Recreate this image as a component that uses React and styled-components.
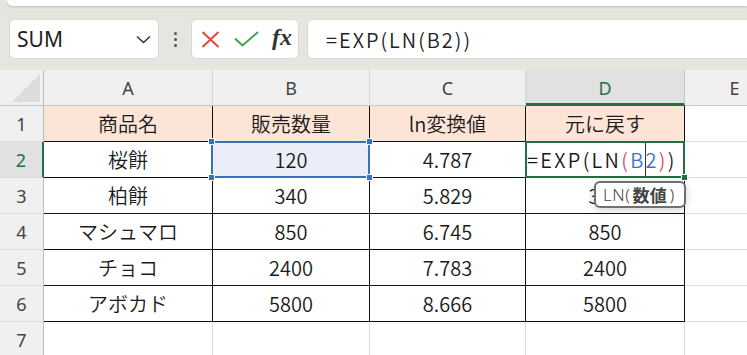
import React from "react";
import styled, { createGlobalStyle, css } from "styled-components";

const GlobalStyle = createGlobalStyle`
  html, body {
    margin: 0;
    padding: 0;
    background: #ffffff;
    overflow: hidden;
  }
  body {
    font-family: "Noto Sans", "Noto Sans CJK JP", sans-serif;
  }
`;

const GREEN = "#1f7145";
const BLUE = "#3a6fc6";
const CELL_FONT = `"Noto Sans CJK JP", "Noto Sans", sans-serif`;

const COLUMNS = ["A", "B", "C", "D", "E"];

const ROWS = [
  ["商品名", "販売数量", "ln変換値", "元に戻す"],
  ["桜餅", "120", "4.787", null],
  ["柏餅", "340", "5.829", "340"],
  ["マシュマロ", "850", "6.745", "850"],
  ["チョコ", "2400", "7.783", "2400"],
  ["アボカド", "5800", "8.666", "5800"],
];

const App = () => {
  return (
    <Page>
      <GlobalStyle />
      <TopStrip />
      <Toolbar>
        <NameBox>
          <NameText>SUM</NameText>
          <svg width="15" height="9" viewBox="0 0 15 9">
            <polyline points="1,1.5 7.5,7.5 14,1.5" fill="none" stroke="#333" strokeWidth="1.5" />
          </svg>
        </NameBox>
        <Grip>
          <Dot />
          <Dot />
          <Dot />
        </Grip>
        <FxBox>
          <svg width="19" height="17" viewBox="0 0 19 17">
            <line x1="1.5" y1="1" x2="17.5" y2="16" stroke="#e5453d" strokeWidth="2" />
            <line x1="17.5" y1="1" x2="1.5" y2="16" stroke="#e5453d" strokeWidth="2" />
          </svg>
          <svg width="25" height="16" viewBox="0 0 25 16">
            <polyline points="1,7.5 8.5,14.5 24,1" fill="none" stroke="#3ea44b" strokeWidth="2" />
          </svg>
          <FxLabel>fx</FxLabel>
        </FxBox>
        <FormulaBar>=EXP(LN(B2))</FormulaBar>
      </Toolbar>

      <Sheet>
        <Corner>
          <CornerTriangle />
        </Corner>
        {COLUMNS.map((c) => (
          <ColHead key={c} $active={c === "D"}>
            {c}
          </ColHead>
        ))}

        {ROWS.map((row, r) => (
          <React.Fragment key={r}>
            <RowHead $active={r === 1}>{r + 1}</RowHead>
            {row.map((value, c) => {
              const selected = r === 1 && c === 1;
              const editing = r === 1 && c === 3;
              return (
                <Cell
                  key={c}
                  $table
                  $title={r === 0}
                  $selected={selected}
                  $editing={editing}
                >
                  {editing ? (
                    <>
                      <EditText>
                        =EXP(LN<Ref $color="#d9506f">(</Ref>
                        <Ref $color="#3f73d0">B</Ref>
                        <Caret />
                        <Ref $color="#3f73d0">2</Ref>
                        <Ref $color="#d9506f">)</Ref>)
                      </EditText>
                      <EditFrame>
                        <FillHandle />
                      </EditFrame>
                      <Tip>
                        LN(<b>数値</b>)
                      </Tip>
                    </>
                  ) : (
                    value
                  )}
                  {selected && (
                    <SelectFrame>
                      <Handle $top $left />
                      <Handle $top />
                      <Handle $left />
                      <Handle />
                    </SelectFrame>
                  )}
                </Cell>
              );
            })}
            <Cell />
          </React.Fragment>
        ))}

        <RowHead>7</RowHead>
        {COLUMNS.map((c) => (
          <Cell key={c} />
        ))}
      </Sheet>
    </Page>
  );
};

const Page = styled.div`
  width: 747px;
  height: 355px;
  overflow: hidden;
  display: flex;
  flex-direction: column;
  background: linear-gradient(#e6e4df, #ebe9e5);
`;

const TopStrip = styled.div`
  height: 6px;
  margin-left: 7px;
  background: #ffffff;
  border-bottom-left-radius: 8px;
  box-shadow: 0 1px 3px rgba(0, 0, 0, 0.16);
`;

const Toolbar = styled.div`
  height: 64px;
  box-sizing: border-box;
  padding: 13px 0 11px 9px;
  display: flex;
  align-items: stretch;
`;

const BarBox = styled.div`
  background: #ffffff;
  border: 1px solid #dcd9d3;
  border-radius: 6px;
  box-sizing: border-box;
  display: flex;
  align-items: center;
`;

const NameBox = styled(BarBox)`
  width: 150px;
  padding: 0 7px 0 7px;
  justify-content: space-between;
`;

const NameText = styled.span`
  font-family: "Noto Sans", sans-serif;
  font-size: 21px;
  color: #222;
`;

const Grip = styled.div`
  width: 32px;
  display: flex;
  flex-direction: column;
  align-items: center;
  justify-content: center;
  gap: 3px;
`;

const Dot = styled.span`
  width: 3px;
  height: 3px;
  border-radius: 50%;
  background: #555;
`;

const FxBox = styled(BarBox)`
  width: 108px;
  padding: 0 6px 0 9px;
  justify-content: space-between;
`;

const FxLabel = styled.span`
  font-family: "Liberation Serif", serif;
  font-style: italic;
  font-weight: bold;
  font-size: 24px;
  color: #333;
  margin-top: -3px;
`;

const FormulaBar = styled(BarBox)`
  flex: 1;
  margin-left: 8px;
  margin-right: -10px;
  padding-left: 18px;
  font-family: ${CELL_FONT};
  font-weight: 350;
  font-size: 20px;
  letter-spacing: 2px;
  color: #222;
`;

const Sheet = styled.div`
  flex: 1;
  background: #ffffff;
  display: grid;
  grid-template-columns: 44px 169px 157px 156px 159px 100px;
  grid-auto-rows: 36px;
  overflow: hidden;
`;

const HeadBase = styled.div`
  box-sizing: border-box;
  background: #f0f0f0;
  font-family: "Noto Sans", sans-serif;
  font-size: 18px;
  color: #444;
  display: flex;
  align-items: center;
  justify-content: center;
`;

const Corner = styled(HeadBase)`
  position: relative;
  border-right: 1px solid #bcbcbc;
  border-bottom: 1px solid #c6c6c6;
`;

const CornerTriangle = styled.div`
  position: absolute;
  left: 12px;
  top: 4px;
  width: 28px;
  height: 28px;
  background: #dcdcdc;
  clip-path: polygon(100% 0, 100% 100%, 0 100%);
`;

const ColHead = styled(HeadBase)`
  border-right: 1px solid #d6d6d6;
  border-bottom: 1px solid #c6c6c6;
  ${(p) =>
    p.$active &&
    css`
      background: #e1e1e1;
      color: ${GREEN};
      border-bottom: 3px solid ${GREEN};
      border-right-color: #c6c6c6;
      padding-top: 2px;
    `}
`;

const RowHead = styled(HeadBase)`
  border-right: 1px solid #bcbcbc;
  border-bottom: 1px solid #dadada;
  ${(p) =>
    p.$active &&
    css`
      background: #e1e1e1;
      color: ${GREEN};
      border-right: 2px solid ${GREEN};
    `}
`;

const Cell = styled.div`
  position: relative;
  box-sizing: border-box;
  border-right: 1px solid ${(p) => (p.$table ? "#111" : "#dcdcdc")};
  border-bottom: 1px solid ${(p) => (p.$table ? "#111" : "#dcdcdc")};
  background: ${(p) => (p.$title ? "#fce4d6" : p.$selected ? "#e9eef8" : "#ffffff")};
  font-family: ${CELL_FONT};
  font-weight: 350;
  font-size: 20px;
  color: #1b1b1b;
  display: flex;
  align-items: center;
  justify-content: ${(p) => (p.$editing ? "flex-start" : "center")};
  ${(p) => (p.$selected || p.$editing) && css`z-index: ${p.$editing ? 3 : 2};`}
`;

const EditText = styled.span`
  padding-left: 1px;
  white-space: nowrap;
  letter-spacing: 2.3px;
  display: flex;
  align-items: center;
`;

const Ref = styled.span`
  color: ${(p) => p.$color};
`;

const Caret = styled.span`
  display: inline-block;
  width: 1px;
  height: 35px;
  background: #333;
  margin-left: -1px;
`;

const EditFrame = styled.div`
  position: absolute;
  top: -1px;
  left: -1px;
  right: -1px;
  bottom: -1px;
  border: 2px solid ${GREEN};
  pointer-events: none;
`;

const FillHandle = styled.span`
  position: absolute;
  right: -5px;
  bottom: -5px;
  width: 5px;
  height: 5px;
  background: ${GREEN};
  border: 1px solid #ffffff;
`;

const SelectFrame = styled.div`
  position: absolute;
  top: -1px;
  left: -2px;
  right: -1px;
  bottom: -1px;
  border: 2px solid ${BLUE};
  pointer-events: none;
`;

const Handle = styled.span`
  position: absolute;
  width: 5px;
  height: 5px;
  background: ${BLUE};
  border: 1px solid #ffffff;
  ${(p) => (p.$top ? "top: -5px;" : "bottom: -5px;")}
  ${(p) => (p.$left ? "left: -5px;" : "right: -5px;")}
`;

const Tip = styled.div`
  position: absolute;
  left: 68px;
  top: 39px;
  height: 27px;
  box-sizing: border-box;
  padding: 0 9px 0 7px;
  display: flex;
  align-items: center;
  background: #ffffff;
  border: 2px solid #707070;
  border-radius: 6px;
  box-shadow: 0 2px 8px rgba(0, 0, 0, 0.18);
  font-family: "Noto Sans", "Noto Sans CJK JP", sans-serif;
  font-size: 17px;
  letter-spacing: 0.5px;
  color: #444;
  white-space: nowrap;

  b {
    font-family: ${CELL_FONT};
    font-weight: bold;
    margin: 0 2px;
  }
`;

export default App;
